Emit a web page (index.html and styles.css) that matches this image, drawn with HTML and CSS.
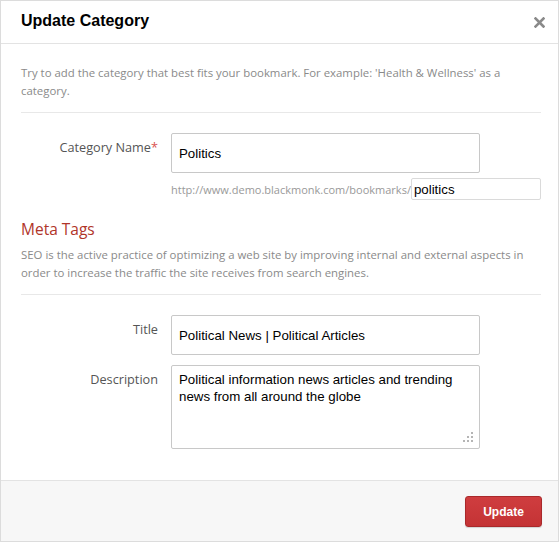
FILE: index.html
```html
<!DOCTYPE html>
<html lang="en">
<head>
<meta charset="utf-8">
<title>Update Category</title>
<link rel="stylesheet" href="styles.css">
</head>
<body>
<div class="modal">
  <div class="modal-header">
    <h1 class="modal-title">Update Category</h1>
    <button class="close" type="button" aria-label="Close">
      <svg width="11" height="11" viewBox="0 0 11 11"><path d="M1.5 1.5 L9.5 9.5 M9.5 1.5 L1.5 9.5" stroke="#8a8a8a" stroke-width="2.6" stroke-linecap="square"/></svg>
    </button>
  </div>
  <div class="modal-body">
    <p class="help">Try to add the category that best fits your bookmark. For example: 'Health &amp; Wellness' as a category.</p>
    <hr class="divider">
    <div class="form-row">
      <label class="label">Category Name<span class="req">*</span></label>
      <div class="field">
        <input class="input" type="text" value="Politics">
        <div class="url-row">
          <span class="url">http://www.demo.blackmonk.com/bookmarks/</span>
          <input class="slug" type="text" value="politics">
        </div>
      </div>
    </div>
    <h2 class="section-title">Meta Tags</h2>
    <p class="help">SEO is the active practice of optimizing a web site by improving internal and external aspects in order to increase the traffic the site receives from search engines.</p>
    <hr class="divider">
    <div class="form-row">
      <label class="label">Title</label>
      <div class="field">
        <input class="input" type="text" value="Political News | Political Articles">
      </div>
    </div>
    <div class="form-row row-gap">
      <label class="label">Description</label>
      <div class="field">
        <div class="textarea-wrap">
          <textarea class="input textarea">Political information news articles and trending news from all around the globe</textarea>
          <svg class="grip" width="10" height="10" viewBox="0 0 10 10" aria-hidden="true">
            <rect x="8" y="0" width="2" height="2" fill="#b5b5b5"/>
            <rect x="4" y="4" width="2" height="2" fill="#b5b5b5"/>
            <rect x="8" y="4" width="2" height="2" fill="#b5b5b5"/>
            <rect x="0" y="8" width="2" height="2" fill="#b5b5b5"/>
            <rect x="4" y="8" width="2" height="2" fill="#b5b5b5"/>
            <rect x="8" y="8" width="2" height="2" fill="#b5b5b5"/>
          </svg>
        </div>
      </div>
    </div>
  </div>
  <div class="modal-footer">
    <button class="btn" type="button">Update</button>
  </div>
</div>
</body>
</html>
```

FILE: styles.css
```css
* { box-sizing: border-box; }
html, body { margin: 0; padding: 0; background: #fff; }
.modal {
  width: 559px;
  height: 542px;
  border: 1px solid #dcdcdc;
  display: flex;
  flex-direction: column;
  background: #fff;
}
.modal-header {
  height: 43px;
  border-bottom: 1px solid #e3e3e3;
  display: flex;
  justify-content: space-between;
  align-items: flex-start;
  padding: 10px 12px 0 20px;
}
.modal-title {
  margin: 0;
  font-family: "Liberation Sans", Arial, sans-serif;
  font-weight: bold;
  font-size: 16px;
  line-height: 20px;
  color: #000;
}
.close {
  border: 0;
  background: none;
  padding: 0;
  margin-top: 5px;
  width: 13px;
  height: 13px;
  display: flex;
  align-items: center;
  justify-content: center;
  cursor: pointer;
}
.modal-body {
  flex: 1;
  padding: 20px 17px 0 20px;
  font-family: "Open Sans", sans-serif;
}
.help {
  margin: 0;
  font-size: 11.4px;
  line-height: 18px;
  color: #8a8a8a;
}
.divider {
  margin: 12px 0 0;
  border: 0;
  border-top: 1px solid #e8e8e8;
  height: 0;
}
.form-row {
  display: grid;
  grid-template-columns: 137px minmax(0, 1fr);
  column-gap: 13px;
  margin-top: 20px;
}
.form-row.row-gap { margin-top: 10px; }
.label {
  text-align: right;
  font-size: 12.7px;
  line-height: 18px;
  padding-top: 5px;
  color: #555;
}
.req { color: #d9534f; }
.field { display: flex; flex-direction: column; min-width: 0; }
.input {
  width: 309px;
  height: 40px;
  border: 1px solid #c8c8c8;
  border-radius: 2px;
  padding: 0 7px;
  font-family: "Liberation Sans", Arial, sans-serif;
  font-size: 13.3px;
  color: #000;
  background: #fff;
  outline: none;
}
.textarea-wrap {
  position: relative;
  width: 309px;
}
.textarea {
  height: 84px;
  padding: 5px 7px;
  line-height: 17px;
  resize: none;
  display: block;
}
.grip {
  position: absolute;
  right: 7px;
  bottom: 7px;
}
.url-row {
  display: flex;
  align-items: center;
  margin-top: 5px;
  height: 22px;
}
.url {
  font-size: 11px;
  color: #999;
  white-space: nowrap;
}
.slug {
  flex: 1;
  width: 0;
  min-width: 0;
  height: 22px;
  border: 1px solid #dadada;
  border-radius: 2px;
  padding: 0 2px;
  font-family: "Liberation Sans", Arial, sans-serif;
  font-size: 13.3px;
  color: #000;
  outline: none;
}
.section-title {
  margin: 18px 0 6px;
  font-weight: normal;
  font-size: 15.5px;
  line-height: 22px;
  color: #b0352a;
}
.modal-footer {
  height: 61px;
  border-top: 1px solid #e3e3e3;
  background: #f7f7f7;
  display: flex;
  justify-content: flex-end;
  align-items: flex-start;
  padding: 15px 16px 0 0;
}
.btn {
  width: 77px;
  height: 31px;
  border: 1px solid #a9292b;
  border-radius: 3px;
  background: linear-gradient(#cf3d3f, #c43335);
  color: #fff;
  font-family: "Liberation Sans", Arial, sans-serif;
  font-weight: bold;
  font-size: 12px;
  cursor: pointer;
  box-shadow: 0 1px 1px rgba(0,0,0,0.15);
}
```
